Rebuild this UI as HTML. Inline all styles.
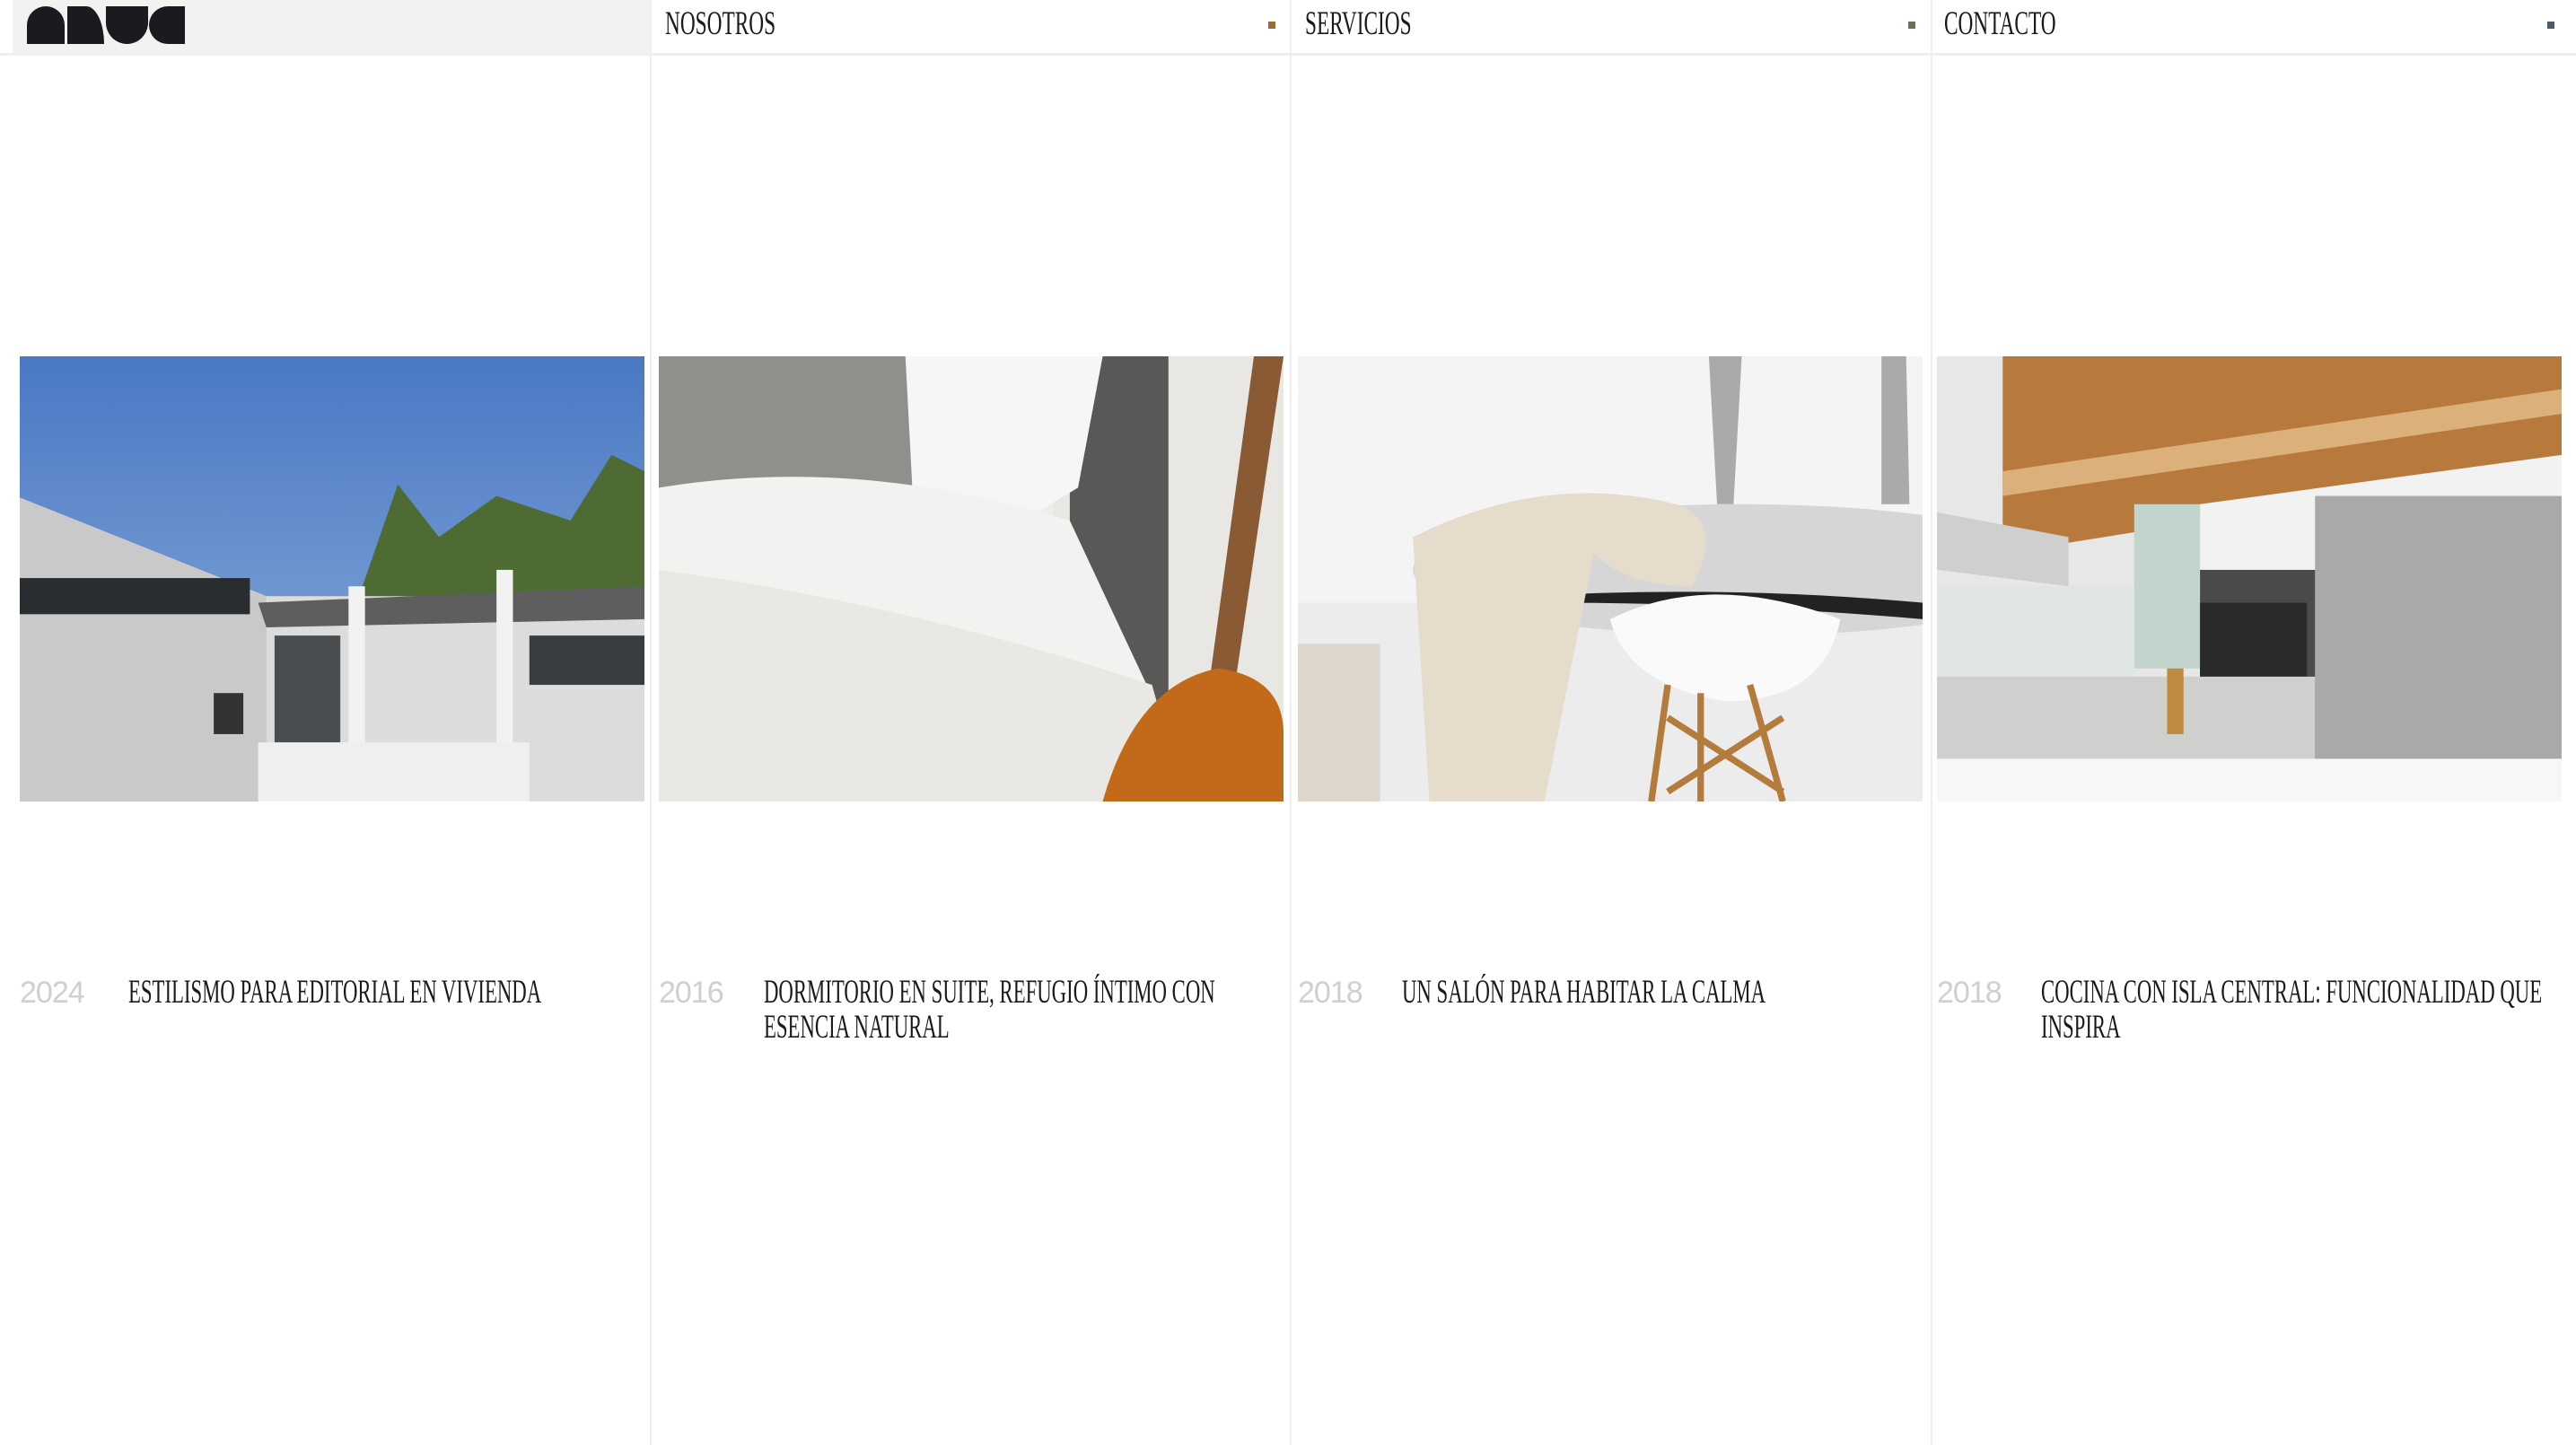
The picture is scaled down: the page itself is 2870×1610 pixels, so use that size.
<!DOCTYPE html>
<html><head><meta charset="utf-8">
<style>
*{margin:0;padding:0;box-sizing:border-box}
html,body{width:2870px;height:1610px;overflow:hidden;background:#fff}
body{position:relative;font-family:"Liberation Serif",serif;color:#1a1a1c}
.vl{position:absolute;top:0;bottom:0;width:2px;background:#efefef}
.hdr{position:absolute;left:0;right:0;top:59px;height:3px;background:#efefef}
.logo{position:absolute;left:14px;top:0;width:710px;height:60px;background:#f2f2f0}
.nav{position:absolute;top:7px;font-size:37px;line-height:40px;white-space:nowrap;transform:scaleX(.63);transform-origin:left top}
.mk{position:absolute;top:24px;width:8px;height:8px}
.img{position:absolute;top:397px;width:696px;height:496px}
.yr{position:absolute;top:1087px;font-family:"Liberation Sans",sans-serif;font-size:34px;color:#cfcfcb;letter-spacing:-1px}
.tt{position:absolute;top:1086px;font-size:37px;line-height:39px;white-space:nowrap}
.tt span{display:block;transform:scaleX(.615);transform-origin:left top}
</style></head><body>
<div class="logo"></div>
<svg style="position:absolute;left:0;top:0" width="230" height="60" viewBox="0 0 230 60">
<g fill="#1b1b1f">
<path d="M30 49V28A21 21 0 0 1 72 28V49Z"/>
<path d="M75 7H96A20 42 0 0 1 116 49H75Z"/>
<path d="M118 7H165V25A23.5 24 0 0 1 118 25Z"/>
<path d="M206 7V49H187A21 21 0 0 1 187 7Z"/>
</g></svg>
<div class="hdr"></div>
<div class="vl" style="left:724px"></div>
<div class="vl" style="left:1437px"></div>
<div class="vl" style="left:2151px"></div>

<div class="nav" style="left:741px">NOSOTROS</div>
<div class="mk" style="left:1413px;background:#9a6a35"></div>
<div class="nav" style="left:1454px">SERVICIOS</div>
<div class="mk" style="left:2126px;background:#6f6f50"></div>
<div class="nav" style="left:2166px">CONTACTO</div>
<div class="mk" style="left:2838px;background:#4f5a66"></div>

<svg class="img" style="left:22px" viewBox="0 0 380 271" preserveAspectRatio="none">
<defs><linearGradient id="sky" x1="0" y1="0" x2="0" y2="1"><stop offset="0" stop-color="#4a78c4"/><stop offset="1" stop-color="#8fb0dc"/></linearGradient></defs>
<rect width="380" height="271" fill="url(#sky)"/>
<path d="M205 150 L230 78 L255 110 L290 85 L335 100 L360 60 L380 70 V160 H205Z" fill="#4d6b32"/>
<path d="M0 86 L150 146 L380 146 V271 H0Z" fill="#dcdcdc"/>
<path d="M0 86 L150 146 V271 H0Z" fill="#c9c9c9"/>
<rect x="0" y="135" width="140" height="22" fill="#2a2d30"/>
<path d="M145 150 L380 140 V160 L150 165Z" fill="#5e5e5e"/>
<rect x="155" y="170" width="40" height="95" fill="#4a4d50"/>
<rect x="200" y="140" width="10" height="125" fill="#f2f2f2"/>
<rect x="290" y="130" width="10" height="135" fill="#f2f2f2"/>
<rect x="310" y="170" width="70" height="30" fill="#3a3d40"/>
<rect x="145" y="235" width="165" height="36" fill="#efefef"/>
<rect x="118" y="205" width="18" height="25" fill="#333"/>
</svg>

<svg class="img" style="left:734px" viewBox="0 0 380 271" preserveAspectRatio="none">
<rect width="380" height="271" fill="#efedea"/>
<rect x="240" y="0" width="140" height="271" fill="#e8e7e3"/>
<rect x="250" y="0" width="60" height="271" fill="#5a5856"/>
<rect x="0" y="0" width="160" height="90" fill="#8f8f8c"/>
<path d="M150 0H270L255 80L230 95H155Z" fill="#f6f6f6"/>
<path d="M0 80 Q120 60 250 100 L330 271 H0Z" fill="#f3f2f0"/>
<path d="M0 130 Q150 150 300 200 L320 271H0Z" fill="#e9e8e5"/>
<path d="M362 0 L380 0 L340 271 L325 271Z" fill="#8a5a35"/>
<path d="M270 271 Q290 200 340 190 Q380 195 380 230 V271Z" fill="#c26a1a"/>
</svg>

<svg class="img" style="left:1446px" viewBox="0 0 380 271" preserveAspectRatio="none">
<rect width="380" height="271" fill="#ececec"/>
<rect x="0" y="0" width="380" height="150" fill="#f4f4f4"/>
<ellipse cx="270" cy="130" rx="200" ry="40" fill="#d6d6d6"/>
<path d="M160 150 Q260 150 380 160 V150 Q270 140 160 145Z" fill="#222"/>
<path d="M190 160 Q250 130 330 160 Q320 210 260 210 Q200 200 190 160Z" fill="#fafafa"/>
<path d="M250 0 L255 90 L265 90 L270 0Z" fill="#aaa"/>
<path d="M355 0 L355 90 L372 90 L370 0Z" fill="#aaa"/>
<path d="M70 110 Q150 70 230 90 Q260 100 240 140 Q200 140 180 120 L150 271 H80 Z" fill="#e6dccb"/>
<path d="M225 200 L215 271 M275 200 L295 271 M245 205 L245 271 M225 220 L295 265 M295 220 L225 265" stroke="#b47c3c" stroke-width="4"/>
<rect x="0" y="175" width="50" height="96" fill="#dcd6cd"/>
</svg>

<svg class="img" style="left:2158px" viewBox="0 0 380 271" preserveAspectRatio="none">
<rect width="380" height="271" fill="#e7e7e6"/>
<path d="M40 0H380V65L40 120Z" fill="#b87a3c"/>
<path d="M40 70 L380 20 V35 L40 85Z" fill="#dcb07a"/>
<path d="M160 90 L380 60 V271 H160Z" fill="#f2f2f2"/>
<rect x="230" y="85" width="150" height="186" fill="#a9a9a7"/>
<rect x="160" y="130" width="70" height="141" fill="#4a4a4a"/>
<rect x="160" y="150" width="65" height="45" fill="#2a2a2a"/>
<rect x="120" y="90" width="40" height="100" fill="#c2d4cc"/>
<path d="M0 95 L80 110 V140 L0 130Z" fill="#cfcfcf"/>
<rect x="0" y="140" width="120" height="55" fill="#e0e6e2"/>
<rect x="0" y="195" width="230" height="60" fill="#cfd0ce"/>
<rect x="0" y="245" width="380" height="26" fill="#f7f7f7"/>
<rect x="140" y="190" width="10" height="40" fill="#c08a40"/>
</svg>

<div class="yr" style="left:22px">2024</div>
<div class="tt" style="left:143px"><span>ESTILISMO PARA EDITORIAL EN VIVIENDA</span></div>
<div class="yr" style="left:734px">2016</div>
<div class="tt" style="left:851px"><span>DORMITORIO EN SUITE, REFUGIO ÍNTIMO CON</span><span>ESENCIA NATURAL</span></div>
<div class="yr" style="left:1446px">2018</div>
<div class="tt" style="left:1562px"><span>UN SALÓN PARA HABITAR LA CALMA</span></div>
<div class="yr" style="left:2158px">2018</div>
<div class="tt" style="left:2274px"><span>COCINA CON ISLA CENTRAL: FUNCIONALIDAD QUE</span><span>INSPIRA</span></div>
</body></html>
